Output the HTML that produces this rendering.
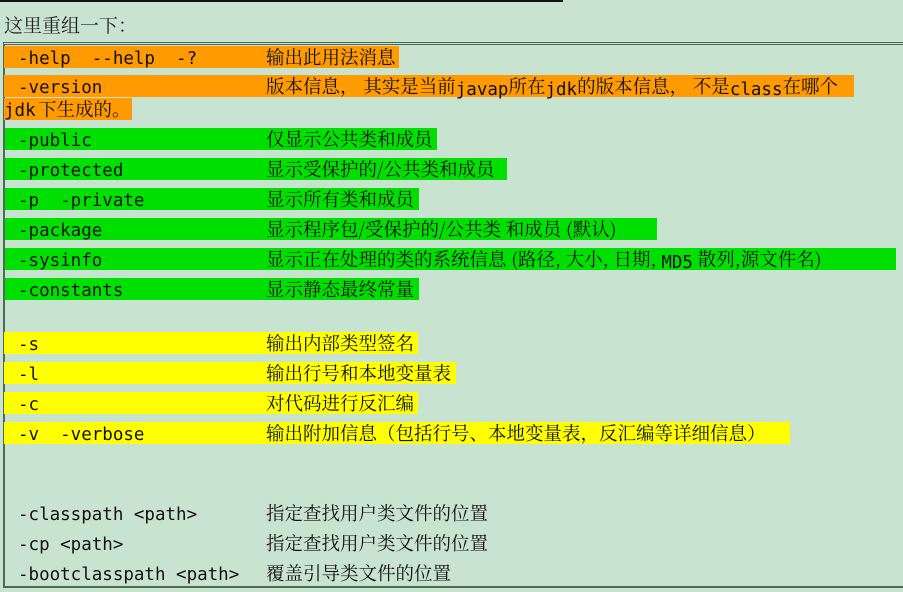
<!DOCTYPE html>
<html><head><meta charset="utf-8"><style>
body{margin:0;width:903px;height:592px;background:#c8e4d0;position:relative;overflow:hidden}
.t{position:absolute;left:4px;top:11px;font:19px "Noto Serif CJK SC","Noto Sans CJK SC",serif;color:#222}
.top{position:absolute;left:0;top:0;width:563px;height:2px;background:#111}
.box{position:absolute;left:3px;top:42px;width:920px;height:541px;border-top:3px double #4a6a50;border-left:2px solid #506a55;border-bottom:2px solid #506a55}
.r{position:absolute;height:22px;line-height:22px;white-space:pre;color:#111}
.m{position:absolute;left:14px;top:2px;line-height:22px;font:17.5px/22px "DejaVu Sans Mono","Liberation Mono",monospace}
.c{position:absolute;left:262px;top:0;font:18.5px/22px "Noto Serif CJK SC","Noto Sans CJK SC",serif}
.c .mm{font:17.5px "DejaVu Sans Mono",monospace;position:relative;top:2px}
.o{background:#ff9a00}.g{background:#00e000}.y{background:#ffff00}
</style></head><body>
<div class="top"></div>
<div class="t">这里重组一下：</div>
<div class="box"></div>
<div class="r o" style="left:4px;top:46px;width:395px"><span class="m">-help  --help  -?</span><span class="c">输出此用法消息</span></div>
<div class="r o" style="left:4px;top:75px;width:850px"><span class="m">-version</span><span class="c">版本信息， 其实是当前<span class="mm">javap</span>所在<span class="mm">jdk</span>的版本信息， 不是<span class="mm">class</span>在哪个</span></div>
<div class="r o" style="left:4px;top:98px;width:128px"><span style="position:absolute;left:0;top:2px;font:17.5px/22px 'DejaVu Sans Mono',monospace">jdk</span><span style="position:absolute;left:34px;font:18.5px/22px 'Noto Serif CJK SC',serif">下生成的。</span></div>
<div class="r g" style="left:5px;top:128px;width:432px"><span class="m" style="left:13px">-public</span><span class="c" style="left:261px">仅显示公共类和成员</span></div>
<div class="r g" style="left:5px;top:158px;width:502px"><span class="m" style="left:13px">-protected</span><span class="c" style="left:261px">显示受保护的/公共类和成员</span></div>
<div class="r g" style="left:5px;top:188px;width:414px"><span class="m" style="left:13px">-p  -private</span><span class="c" style="left:261px">显示所有类和成员</span></div>
<div class="r g" style="left:5px;top:218px;width:652px"><span class="m" style="left:13px">-package</span><span class="c" style="left:261px">显示程序包/受保护的/公共类 和成员 (默认)</span></div>
<div class="r g" style="left:5px;top:248px;width:891px"><span class="m" style="left:13px">-sysinfo</span><span class="c" style="left:261px">显示正在处理的类的系统信息 (路径, 大小, 日期, <span class="mm">MD5</span> 散列,源文件名)</span></div>
<div class="r g" style="left:5px;top:278px;width:414px"><span class="m" style="left:13px">-constants</span><span class="c" style="left:261px">显示静态最终常量</span></div>
<div class="r y" style="left:4px;top:332px;width:414px"><span class="m">-s</span><span class="c">输出内部类型签名</span></div>
<div class="r y" style="left:4px;top:362px;width:452px"><span class="m">-l</span><span class="c">输出行号和本地变量表</span></div>
<div class="r y" style="left:4px;top:392px;width:414px"><span class="m">-c</span><span class="c">对代码进行反汇编</span></div>
<div class="r y" style="left:4px;top:422px;width:786px"><span class="m">-v  -verbose</span><span class="c">输出附加信息（包括行号、本地变量表，反汇编等详细信息）</span></div>
<div class="r" style="left:4px;top:502px;width:600px"><span class="m">-classpath &lt;path&gt;</span><span class="c">指定查找用户类文件的位置</span></div>
<div class="r" style="left:4px;top:532px;width:600px"><span class="m">-cp &lt;path&gt;</span><span class="c">指定查找用户类文件的位置</span></div>
<div class="r" style="left:4px;top:562px;width:600px"><span class="m">-bootclasspath &lt;path&gt;</span><span class="c">覆盖引导类文件的位置</span></div>
</body></html>
